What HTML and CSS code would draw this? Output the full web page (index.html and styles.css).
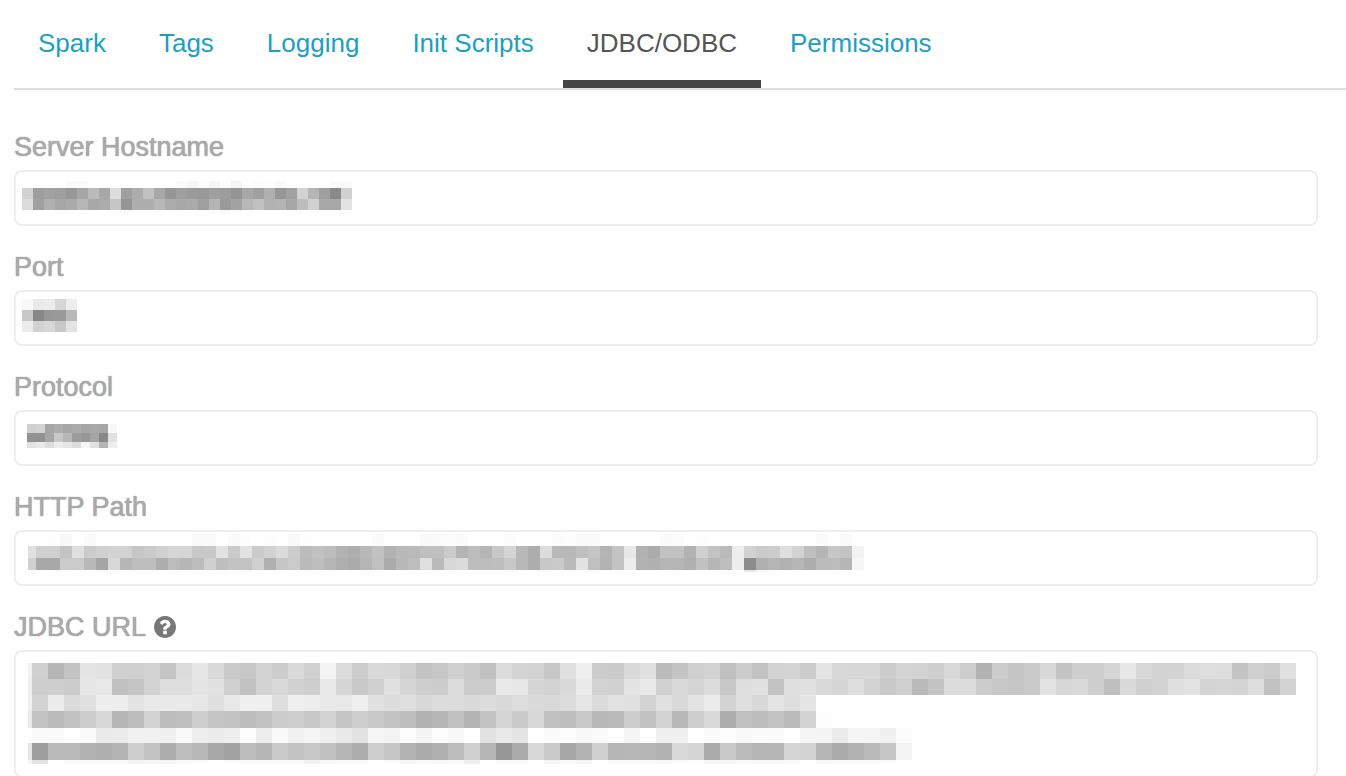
FILE: index.html
```html
<!DOCTYPE html>
<html lang="en">
<head>
    <meta charset="UTF-8">
    <meta name="viewport" content="width=device-width, initial-scale=1.0">
    <title>JDBC/ODBC</title>
    <link rel="stylesheet" href="styles.css">
</head>
<body>
    <nav class="tabs">
        <a class="tab" href="#spark">Spark</a>
        <a class="tab" href="#tags">Tags</a>
        <a class="tab" href="#logging">Logging</a>
        <a class="tab" href="#init-scripts">Init Scripts</a>
        <a class="tab active" href="#jdbc" aria-current="page">JDBC/ODBC</a>
        <a class="tab" href="#permissions">Permissions</a>
    </nav>

    <form class="settings">
        <div class="field">
            <div class="field-head"><label for="hostname">Server Hostname</label></div>
            <div class="value">
                <input id="hostname" type="text" readonly>
                <svg id="hostname-mask" class="mask mask-hostname"></svg>
            </div>
        </div>
        <div class="field">
            <div class="field-head"><label for="port">Port</label></div>
            <div class="value">
                <input id="port" type="text" readonly>
                <svg id="port-mask" class="mask mask-port"></svg>
            </div>
        </div>
        <div class="field">
            <div class="field-head"><label for="protocol">Protocol</label></div>
            <div class="value">
                <input id="protocol" type="text" readonly>
                <svg id="protocol-mask" class="mask mask-protocol"></svg>
            </div>
        </div>
        <div class="field">
            <div class="field-head"><label for="http-path">HTTP Path</label></div>
            <div class="value">
                <input id="http-path" type="text" readonly>
                <svg id="http-path-mask" class="mask mask-http-path"></svg>
            </div>
        </div>
        <div class="field">
            <div class="field-head">
                <label for="jdbc-url">JDBC URL</label>
                <button type="button" class="help-btn" aria-label="Help">
                    <svg viewBox="0 0 1536 1536"><path d="M896 1248v-192q0-14-9-23t-23-9h-192q-14 0-23 9t-9 23v192q0 14 9 23t23 9h192q14 0 23-9t9-23zm256-672q0-88-55.5-163t-138.5-116-170-41q-243 0-371 213-15 24 8 42l132 100q7 6 19 6 16 0 25-12 53-68 86-92 34-24 86-24 48 0 85.5 26t37.5 59q0 38-20 61t-68 45q-63 28-115.5 86.5t-52.5 125.5v36q0 14 9 23t23 9h192q14 0 23-9t9-23q0-19 21.5-49.5t54.5-49.5q32-18 49-28.5t46-35 44.5-48 28-60.5 12.5-81zm384 192q0 209-103 385.5t-279.5 279.5-385.5 103-385.5-103-279.5-279.5-103-385.5 103-385.5 279.5-279.5 385.5-103 385.5 103 279.5 279.5 103 385.5z"/></svg>
                </button>
            </div>
            <div class="value">
                <textarea id="jdbc-url" readonly></textarea>
                <svg id="jdbc-url-mask" class="mask mask-jdbc-url"></svg>
            </div>
        </div>
    </form>

    <script src="masks.js"></script>
</body>
</html>
```
FILE: styles.css
```css
* {
    box-sizing: border-box;
}
html {
    overflow: hidden;
}
body {
    margin: 0;
    padding-left: 14px;
    background-color: #fff;
    font-family: "Liberation Sans", Arial, sans-serif;
}

/* Tabs */
.tabs {
    display: flex;
    gap: 5px;
    border-bottom: 2px solid #ddd;
}
.tab {
    padding: 28px 24px 22px;
    border-bottom: 8px solid transparent;
    font-size: 26px;
    line-height: 30px;
    color: #1b9fc4;
    text-decoration: none;
}
.tab.active {
    color: #555;
    border-bottom-color: #444;
}

/* Form */
.settings {
    display: flex;
    flex-direction: column;
    gap: 24px;
    padding: 40px 28px 0 0;
}
.field-head {
    display: flex;
    align-items: center;
    gap: 8px;
    margin-bottom: 6px;
    font-size: 27px;
    line-height: 34px;
    color: #a9a9a9;
    text-shadow: 0 0 1px #a9a9a9, 0 0 1px #a9a9a9;
}
.help-btn {
    width: 22px;
    height: 22px;
    padding: 0;
    border: none;
    background: none;
    cursor: pointer;
}
.help-btn svg {
    display: block;
    fill: #777;
}
.value {
    position: relative;
}
input, textarea {
    display: block;
    width: 100%;
    height: 56px;
    padding: 8px 12px;
    border: 2px solid #eee;
    border-radius: 8px;
    background-color: #fff;
    font: inherit;
    font-size: 26px;
    outline: none;
}
textarea {
    height: 128px;
    resize: none;
}

/* Pixelated cover over the private values */
.mask {
    position: absolute;
    pointer-events: none;
    shape-rendering: crispEdges;
}
.mask-hostname {
    left: 8px;
    top: 11px;
}
.mask-port {
    left: 8px;
    top: 9px;
}
.mask-protocol {
    left: 13px;
    top: 14px;
}
.mask-http-path {
    left: 14px;
    top: 4px;
}
.mask-jdbc-url {
    left: 14px;
    top: 13px;
}
```
FILE: masks.js
```js
// Every row is [height, grey levels]. "first" is the width of a narrower first cell.
const masks = {
    'hostname': {
        cell: 11,
        rows: [
            [7, 'ff ff ff ff fa fb ff ff ff ff ff ff ff ff fb f6 fd f6 fe f4 fe fc fd fa ff ff ff ff fa f9'],
            [11, 'd2 9e a2 9f 98 a6 bb a8 dd 9f ac c1 a8 97 9f 9b 99 9f 9d 94 a7 a0 b0 96 a2 d2 b5 9f 8a d0'],
            [11, 'dc a0 b0 a6 aa b7 a8 ac c6 96 ae ae b8 ac a8 aa 9f b5 9a a3 b8 c0 b2 b4 a6 bd d0 a8 a8 e3'],
            [4, 'fd ff ff fd ff fd ff ff fd fb fe fe fe ff fd fd ff fc fa fc fe ff ff fe fc ff fe fd fd fc']
        ]
    },
    'port': {
        cell: 11,
        rows: [
            [11, 'f8 e9 ec d6 ee'],
            [11, 'c8 88 97 99 b9'],
            [11, 'ec d1 d7 c8 e3']
        ]
    },
    'protocol': {
        cell: 9,
        rows: [
            [9, 'd0 d3 a5 ad a6 ab a6 a8 a6 f8'],
            [9, '93 92 a6 c8 b6 9c 98 a5 88 e1'],
            [6, 'e2 ea dd ec e5 dc f7 e2 b5 ee']
        ]
    },
    'http-path': {
        first: 8,
        cell: 12,
        rows: [
            [12, 'ff ff fd f8 ff fb fe ff ff ff ff ff ff ff fa fb ff fb fd ff fd fe f9 fd fe ff ff ff ff fb ff ff ff f9 fb fc fb ff fe ff fc ff fe ff fc fd fa fa ff ff ff fe ff fb fc ff fd fe fe ff ff ff ff ff ff ff fb fe fb fe'],
            [12, 'e0 d0 d0 c3 e0 cb d0 d3 d2 c6 ca d0 d6 d6 c8 c9 e2 cb e2 cb d2 db cc bc c0 bc b2 ae b8 c1 b2 b9 ba bf c0 cb b4 bd b5 c8 d5 b8 ad dd b9 b9 bf c5 b4 c3 e8 b1 ac c2 c2 b2 d0 c3 ba ed d2 ca cd df d2 bf b5 c6 c4 f3'],
            [12, 'd0 a8 a8 cb cb b9 a5 d8 b6 be be ae bc b6 bd d0 be c3 c3 d0 b0 c6 cb ba be b5 af ab b5 c0 ab b9 be e0 ba d8 db bd bc be c8 b8 ae c8 ca ba e2 c0 b3 c3 ed b2 b0 b6 b5 b0 c1 b6 be ed 8c b0 b5 b1 b6 ae bb bc b6 f6'],
            [2, 'ff ff fd fb ff fd fb ff ff ff ff ff ff ff ff fe ff fe fb fe ff fe ff ff ff fe ff ff ff fe ff ff ff fe ff ff ff ff ff ff fa ff ff fa ff ff ff fa ff ff ff ff ff ff ff ff ff ff ff ff e6 f7 ff ff ff ff ff ff ff ff']
        ]
    },
    'jdbc-url': {
        first: 4,
        cell: 16,
        rows: [
            [16, 'f2 d0 b6 c4 e4 e2 d0 d0 d3 c5 dc e6 da ca c7 d3 cc da d1 f4 dc cd da d8 d0 c3 c7 d0 ca c0 dc d4 d2 c7 e0 ef cc ca da e0 bb c4 d0 d3 c0 cb c3 d3 d4 cc e4 d8 d7 d7 cc d4 d2 cf d9 ce b2 cc c5 ca d8 c4 cf cf d5 e7 d8 d3 d3 dc df de c4 d0 cc e0'],
            [16, 'ee ce cf cb e6 e8 c0 c5 d2 dd de e4 e1 d0 c2 d3 d9 d1 ce e9 d6 c9 d0 e1 d5 cf cc dc cb cb e9 e7 d6 d2 da ea d2 d1 e3 e9 d1 d9 d6 dc c8 de e1 c4 df e1 d9 d6 de d2 c9 d0 ba c4 dc dc cc c8 c6 ca e3 d7 d9 cf bf da d0 d2 df e3 d4 d6 d4 dd c2 d3'],
            [16, 'f0 d2 ec db e1 ed ed e3 e9 e8 e9 e7 df e8 f0 f0 de ef ed e9 e8 ef e1 dc df d8 dc dc da dc d9 dd da d9 dc e6 db e2 e0 d3 e0 d9 e3 eb d3 df d8 e4 de e5'],
            [17, 'ea c4 bb c2 cd d8 b5 bc d3 bc bf cf c5 c3 bd c2 cc ce c7 d2 c5 cf c9 c3 be b2 b6 c1 b4 c4 d6 ca d8 c0 be c9 b9 ba cd c2 d3 b9 ce da ae c0 bc c4 bb d3 fd'],
            [15, 'fe fa fb ff fa ea ec f1 f1 f0 f9 ee eb ee fd ed f9 f1 f5 f0 e9 e2 f6 f3 fd f4 fd f8 fe e2 e9 e5 fe fa fd f8 fa fe f5 fe f0 f0 ff fb fd f9 fb fa fe f5 f4 ec f5 f5 f0 fc'],
            [17, 'e6 9e ba ba b1 af b4 cf c3 ae be b8 a8 a3 bc b6 ca c4 c8 c1 b5 ae cf c6 b3 aa b0 bc d0 b5 97 ab d8 ca a7 b3 d0 b5 b7 b6 b1 d9 d5 ab c9 bb b5 b5 d6 d2 b5 ab b1 ba c6 f3'],
            [4, 'f6 e2 ff f8 fa fa fa f2 f6 f5 fa fb fe fb f9 f8 fa f9 f1 f7 f9 f9 ff fb f6 f8 f7 fa ef ff fa fa ff f5 f8 f5 ff f8 f8 f9 f7 fb fd f6 f6 f8 f7 f7 fa ff f7 f8 f9 f9 fb fe']
        ]
    }
};

const SVG_NS = 'http://www.w3.org/2000/svg';

function drawMask(id, mask) {
    const svg = document.getElementById(`${id}-mask`);
    let y = 0;
    let right = 0;

    mask.rows.forEach(([height, levels]) => {
        let x = 0;
        levels.split(' ').forEach((level, i) => {
            const width = i === 0 && mask.first ? mask.first : mask.cell;
            const rect = document.createElementNS(SVG_NS, 'rect');
            rect.setAttribute('x', x);
            rect.setAttribute('y', y);
            rect.setAttribute('width', width);
            rect.setAttribute('height', height);
            rect.setAttribute('fill', `#${level}${level}${level}`);
            svg.appendChild(rect);
            x += width;
        });
        y += height;
        right = Math.max(right, x);
    });

    svg.setAttribute('width', right);
    svg.setAttribute('height', y);
}

Object.keys(masks).forEach((id) => drawMask(id, masks[id]));
```
